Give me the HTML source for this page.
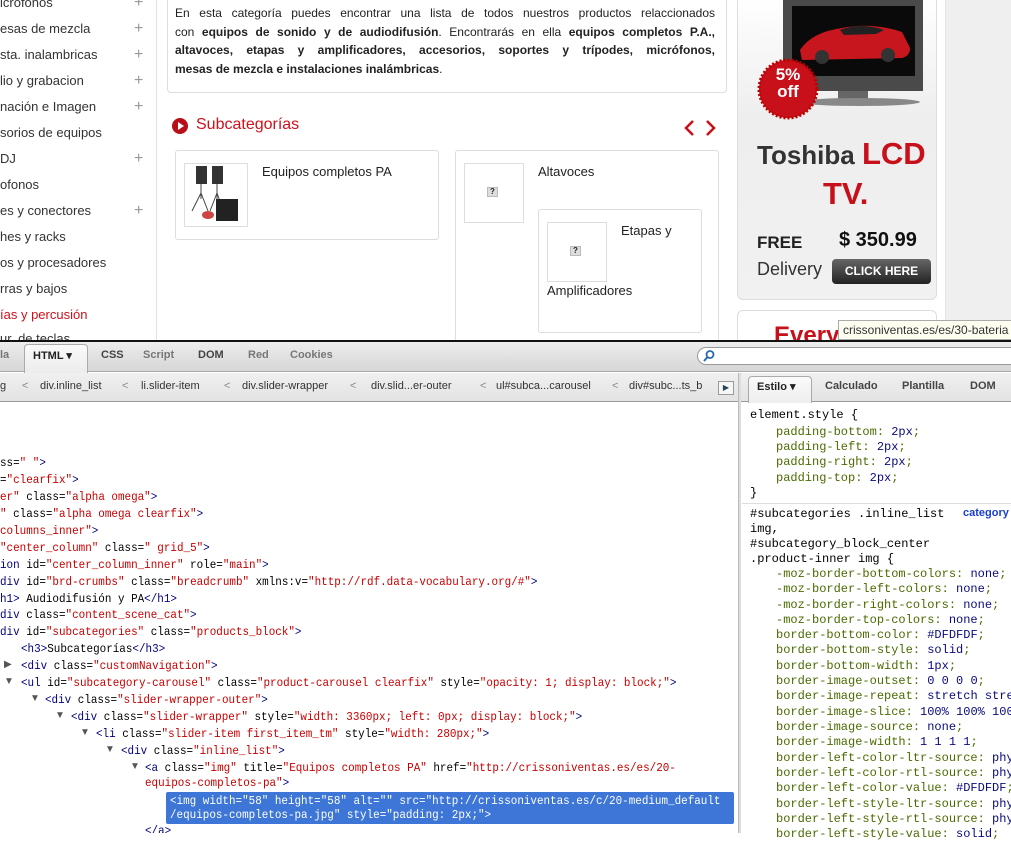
<!DOCTYPE html>
<html><head><meta charset="utf-8">
<style>
*{margin:0;padding:0;box-sizing:border-box}
body{width:1011px;height:833px;overflow:hidden;position:relative;background:#fff;font-family:"Liberation Sans",sans-serif;color:#222}
.a{position:absolute;white-space:nowrap}
.sb{font-size:13px;color:#333;left:0}
.pl{left:134px;font-size:16px;color:#999;font-weight:normal}
.desc{left:175px;width:540px;font-size:12px;text-align:justify;text-align-last:justify;color:#222;white-space:normal}
.desc b{font-weight:bold}
.card{position:absolute;border:1px solid #ddd;border-radius:3px;background:#fff}
.img{position:absolute;border:1px solid #ddd;background:#fff}
.q{position:absolute;width:11px;height:10px;background:#ddd;border:1px solid #bbb;font-size:8px;font-weight:bold;text-align:center;line-height:8px}
.code{position:absolute;left:0;top:403px;width:738px;height:430px;overflow:hidden;background:#fff}
.cl{position:absolute;font-family:"Liberation Mono",monospace;font-size:12px;white-space:nowrap;transform:scaleX(0.91);transform-origin:0 0;color:#000}
.t{color:#00007f}.v{color:#c80000}
.tri{position:absolute;font-size:10px;color:#555}
.css{position:absolute;font-family:"Liberation Mono",monospace;font-size:12px;white-space:nowrap;color:#000}
.p{color:#4a6b00}.n{color:#0a0a80}
.bc{position:absolute;top:380px;font-size:11px;color:#333;white-space:nowrap}
.bl{position:absolute;top:380px;font-size:11px;color:#888}
.tb{position:absolute;top:349px;font-size:11px;font-weight:bold;color:#777}
</style></head><body>

<!-- sidebar -->
<div class="a" style="left:156px;top:0;width:1px;height:340px;background:#e2e2e2"></div>
<div class="a sb" style="top:-5px">icrófonos</div><div class="a pl" style="top:-6px">+</div>
<div class="a sb" style="top:21px">esas de mezcla</div><div class="a pl" style="top:20px">+</div>
<div class="a sb" style="top:47px">sta. inalambricas</div><div class="a pl" style="top:46px">+</div>
<div class="a sb" style="top:73px">lio y grabacion</div><div class="a pl" style="top:72px">+</div>
<div class="a sb" style="top:99px">nación e Imagen</div><div class="a pl" style="top:98px">+</div>
<div class="a sb" style="top:125px">sorios de equipos</div>
<div class="a sb" style="top:151px"> DJ</div><div class="a pl" style="top:150px">+</div>
<div class="a sb" style="top:177px">ofonos</div>
<div class="a sb" style="top:203px">es y conectores</div><div class="a pl" style="top:202px">+</div>
<div class="a sb" style="top:229px">hes y racks</div>
<div class="a sb" style="top:255px">os y procesadores</div>
<div class="a sb" style="top:281px">rras y bajos</div>
<div class="a sb" style="top:307px;color:#d0101a">ías y percusión</div>
<div class="a sb" style="top:331px">ur. de teclas</div>

<!-- description box -->
<div class="card" style="left:167px;top:-6px;width:560px;height:99px;border-radius:4px"></div>
<div class="a desc" style="top:6px">En esta categoría puedes encontrar una lista de todos nuestros productos relaccionados</div>
<div class="a desc" style="top:25px">con <b>equipos de sonido y de audiodifusión</b>. Encontrarás en ella <b>equipos completos P.A.,</b></div>
<div class="a desc" style="top:43px"><b>altavoces, etapas y amplificadores, accesorios, soportes y trípodes, micrófonos,</b></div>
<div class="a desc" style="top:62px;text-align-last:left"><b>mesas de mezcla e instalaciones inalámbricas</b>.</div>

<!-- subcategorias heading -->
<div class="a" style="left:172px;top:118px;width:16px;height:16px;border-radius:50%;background:#b8101a"></div>
<div class="a" style="left:178px;top:122px;width:0;height:0;border-left:6px solid #fff;border-top:4px solid transparent;border-bottom:4px solid transparent"></div>
<div class="a" style="left:196px;top:116px;font-size:16px;color:#d0101a">Subcategorías</div>
<svg class="a" style="left:680px;top:118px" width="40" height="20"><path d="M13 3 L6 10 L13 17" stroke="#c8101a" stroke-width="2.5" fill="none"/><path d="M27 3 L34 10 L27 17" stroke="#c8101a" stroke-width="2.5" fill="none"/></svg>

<!-- card 1 -->
<div class="card" style="left:175px;top:150px;width:264px;height:90px"></div>
<div class="img" style="left:184px;top:163px;width:64px;height:64px"></div>
<svg class="a" style="left:186px;top:165px" width="60" height="60">
<rect x="10" y="1" width="11" height="18" fill="#333"/><rect x="26" y="1" width="11" height="18" fill="#333"/>
<path d="M15 19 L15 34 M15 28 L6 46 M15 28 L22 46 M31 19 L31 34 M31 28 L24 46 M31 28 L36 42" stroke="#444" stroke-width="1"/>
<rect x="30" y="34" width="22" height="22" fill="#222"/><ellipse cx="22" cy="50" rx="6" ry="4" fill="#c44"/>
</svg>
<div class="a" style="left:262px;top:164px;font-size:13px;color:#222">Equipos completos PA</div>

<!-- card 2 -->
<div class="card" style="left:455px;top:150px;width:264px;height:200px"></div>
<div class="img" style="left:464px;top:163px;width:60px;height:60px"></div>
<div class="q" style="left:487px;top:187px">?</div>
<div class="a" style="left:538px;top:164px;font-size:13px;color:#222">Altavoces</div>
<div class="card" style="left:538px;top:209px;width:164px;height:124px"></div>
<div class="img" style="left:547px;top:222px;width:60px;height:60px"></div>
<div class="q" style="left:570px;top:246px">?</div>
<div class="a" style="left:621px;top:223px;font-size:13px;color:#222">Etapas y</div>
<div class="a" style="left:547px;top:283px;font-size:13px;color:#222">Amplificadores</div>

<!-- right gray -->
<div class="a" style="left:945px;top:0;width:66px;height:340px;background:#efefef;border-left:1px solid #e3e3e3"></div>

<!-- ad -->
<div class="a" style="left:737px;top:-6px;width:200px;height:306px;border:1px solid #ddd;border-radius:6px;background:linear-gradient(#fff,#eee 40%,#f1f1f1)"></div>
<div class="a" style="left:783px;top:0;width:140px;height:91px;background:#4a4a4a"></div>
<div class="a" style="left:792px;top:6px;width:123px;height:70px;background:#0a0a0a"></div>
<svg class="a" style="left:792px;top:10px" width="123" height="60"><path d="M8 40 Q20 22 50 18 Q80 12 110 22 L118 38 Q118 46 110 48 L10 50 Z" fill="#c8161e"/><circle cx="30" cy="47" r="7" fill="#333"/><circle cx="96" cy="45" r="7" fill="#333"/><path d="M48 20 Q70 12 92 20 L84 24 L52 25Z" fill="#222"/></svg>
<div class="a" style="left:838px;top:91px;width:30px;height:8px;background:#666"></div>
<div class="a" style="left:800px;top:98px;width:120px;height:8px;border-radius:50%;background:#888"></div>
<svg class="a" style="left:757px;top:58px" width="62" height="62"><circle cx="31" cy="31" r="29" fill="#c8101a" stroke="#b00" stroke-width="3" stroke-dasharray="2 2"/></svg>
<div class="a" style="left:772px;top:66px;font-size:17px;font-weight:bold;color:#fff;line-height:17px;text-align:center;width:32px">5%<br>off</div>
<div class="a" style="left:757px;top:136px;font-size:26px;font-weight:bold;color:#333">Toshiba <span style="color:#c8101a;font-size:31px">LCD</span></div>
<div class="a" style="left:823px;top:176px;font-size:31px;font-weight:bold;color:#c8101a">TV.</div>
<div class="a" style="left:757px;top:233px;font-size:17px;font-weight:bold;color:#222">FREE</div>
<div class="a" style="left:839px;top:229px;font-size:20px;font-weight:bold;color:#111">$ 350.99</div>
<div class="a" style="left:757px;top:259px;font-size:18px;color:#333">Delivery</div>
<div class="a" style="left:832px;top:259px;width:99px;height:25px;border-radius:4px;background:linear-gradient(#666,#222);color:#fff;font-size:12px;font-weight:bold;text-align:center;line-height:25px">CLICK HERE</div>
<div class="a" style="left:737px;top:310px;width:200px;height:40px;border:1px solid #ddd;border-radius:6px;background:#fff"></div>
<div class="a" style="left:774px;top:322px;font-size:24px;font-weight:bold;color:#c8101a">Every</div>
<div class="a" style="left:838px;top:320px;width:180px;height:20px;background:#fdfdf0;border:1px solid #aaa;font-size:12px;color:#333;padding:2px 4px">crissoniventas.es/es/30-bateria</div>

<!-- firebug toolbar -->
<div class="a" style="left:0;top:340px;width:1011px;height:2px;background:#111"></div>
<div class="a" style="left:0;top:342px;width:1011px;height:30px;background:linear-gradient(#ededed,#d6d6d6);border-bottom:1px solid #aaa"></div>
<div class="tb" style="left:0">la</div>
<div class="a" style="left:24px;top:344px;width:64px;height:29px;background:linear-gradient(#fafafa,#ececec);border:1px solid #aaa;border-bottom:none;border-radius:4px 4px 0 0"></div>
<div class="tb" style="left:33px;color:#222">HTML ▾</div>
<div class="tb" style="left:101px;color:#444">CSS</div>
<div class="tb" style="left:143px">Script</div>
<div class="tb" style="left:198px;color:#444">DOM</div>
<div class="tb" style="left:248px">Red</div>
<div class="tb" style="left:290px">Cookies</div>
<div class="a" style="left:697px;top:347px;width:330px;height:18px;background:#fff;border:1px solid #999;border-radius:9px"></div>
<svg class="a" style="left:702px;top:349px" width="14" height="14"><circle cx="8" cy="5.5" r="3.5" stroke="#2a6aa8" stroke-width="1.8" fill="none"/><path d="M5.5 8 L2 12" stroke="#2a6aa8" stroke-width="2"/></svg>

<!-- breadcrumb bar -->
<div class="a" style="left:0;top:373px;width:1011px;height:29px;background:linear-gradient(#f0f0f0,#e3e3e3);border-bottom:1px solid #999"></div>
<div class="bc" style="left:0">g</div><div class="bl" style="left:22px">&lt;</div>
<div class="bc" style="left:40px">div.inline_list</div><div class="bl" style="left:122px">&lt;</div>
<div class="bc" style="left:141px">li.slider-item</div><div class="bl" style="left:224px">&lt;</div>
<div class="bc" style="left:242px">div.slider-wrapper</div><div class="bl" style="left:350px">&lt;</div>
<div class="bc" style="left:371px">div.slid...er-outer</div><div class="bl" style="left:480px">&lt;</div>
<div class="bc" style="left:496px">ul#subca...carousel</div><div class="bl" style="left:612px">&lt;</div>
<div class="bc" style="left:629px">div#subc...ts_b</div>
<div class="a" style="left:718px;top:381px;width:16px;height:14px;border:1px solid #999;background:#f6f6f6;font-size:8px;text-align:center;line-height:12px;color:#245">▶</div>
<div class="a" style="left:738px;top:373px;width:3px;height:460px;background:#ddd;border-left:1px solid #bbb"></div>
<div class="a" style="left:748px;top:376px;width:64px;height:27px;background:linear-gradient(#fafafa,#eee);border:1px solid #aaa;border-bottom:none;border-radius:4px 4px 0 0"></div>
<div class="bc" style="left:757px;font-weight:bold;color:#222">Estilo ▾</div>
<div class="bc" style="left:825px;font-weight:bold;color:#444">Calculado</div>
<div class="bc" style="left:902px;font-weight:bold;color:#444">Plantilla</div>
<div class="bc" style="left:970px;font-weight:bold;color:#444">DOM</div>

<!-- code -->
<div class="code">
<div class="cl" style="left:0;top:53px">ss=<span class="v">" "</span><span class="t">&gt;</span></div>
<div class="cl" style="left:0;top:70px">=<span class="v">"clearfix"</span><span class="t">&gt;</span></div>
<div class="cl" style="left:0;top:87px"><span class="v">er"</span> class=<span class="v">"alpha omega"</span><span class="t">&gt;</span></div>
<div class="cl" style="left:0;top:104px"><span class="v">"</span> class=<span class="v">"alpha omega clearfix"</span><span class="t">&gt;</span></div>
<div class="cl" style="left:0;top:121px"><span class="v">columns_inner"</span><span class="t">&gt;</span></div>
<div class="cl" style="left:0;top:138px"><span class="v">"center_column"</span> class=<span class="v">" grid_5"</span><span class="t">&gt;</span></div>
<div class="cl" style="left:0;top:155px"><span class="t">ion</span> id=<span class="v">"center_column_inner"</span> role=<span class="v">"main"</span><span class="t">&gt;</span></div>
<div class="cl" style="left:0;top:172px"><span class="t">div</span> id=<span class="v">"brd-crumbs"</span> class=<span class="v">"breadcrumb"</span> xmlns:v=<span class="v">"http://rdf.data-vocabulary.org/#"</span><span class="t">&gt;</span></div>
<div class="cl" style="left:0;top:189px"><span class="t">h1&gt;</span> Audiodifusión y PA<span class="t">&lt;/h1&gt;</span></div>
<div class="cl" style="left:0;top:205px"><span class="t">div</span> class=<span class="v">"content_scene_cat"</span><span class="t">&gt;</span></div>
<div class="cl" style="left:0;top:222px"><span class="t">div</span> id=<span class="v">"subcategories"</span> class=<span class="v">"products_block"</span><span class="t">&gt;</span></div>
<div class="cl" style="left:21px;top:239px"><span class="t">&lt;h3&gt;</span>Subcategorías<span class="t">&lt;/h3&gt;</span></div>
<div class="tri" style="left:4px;top:256px">▶</div>
<div class="cl" style="left:21px;top:256px"><span class="t">&lt;div</span> class=<span class="v">"customNavigation"</span><span class="t">&gt;</span></div>
<div class="tri" style="left:4px;top:273px">▼</div>
<div class="cl" style="left:21px;top:273px"><span class="t">&lt;ul</span> id=<span class="v">"subcategory-carousel"</span> class=<span class="v">"product-carousel clearfix"</span> style=<span class="v">"opacity: 1; display: block;"</span><span class="t">&gt;</span></div>
<div class="tri" style="left:30px;top:290px">▼</div>
<div class="cl" style="left:45px;top:290px"><span class="t">&lt;div</span> class=<span class="v">"slider-wrapper-outer"</span><span class="t">&gt;</span></div>
<div class="tri" style="left:55px;top:307px">▼</div>
<div class="cl" style="left:71px;top:307px"><span class="t">&lt;div</span> class=<span class="v">"slider-wrapper"</span> style=<span class="v">"width: 3360px; left: 0px; display: block;"</span><span class="t">&gt;</span></div>
<div class="tri" style="left:80px;top:324px">▼</div>
<div class="cl" style="left:96px;top:324px"><span class="t">&lt;li</span> class=<span class="v">"slider-item first_item_tm"</span> style=<span class="v">"width: 280px;"</span><span class="t">&gt;</span></div>
<div class="tri" style="left:105px;top:341px">▼</div>
<div class="cl" style="left:121px;top:341px"><span class="t">&lt;div</span> class=<span class="v">"inline_list"</span><span class="t">&gt;</span></div>
<div class="tri" style="left:130px;top:358px">▼</div>
<div class="cl" style="left:145px;top:358px"><span class="t">&lt;a</span> class=<span class="v">"img"</span> title=<span class="v">"Equipos completos PA"</span> href=<span class="v">"http://crissoniventas.es/es/20-</span></div>
<div class="cl" style="left:145px;top:373px"><span class="v">equipos-completos-pa"</span><span class="t">&gt;</span></div>
<div class="a" style="left:166px;top:389px;width:568px;height:32px;background:#3d76d6;border-radius:2px"></div>
<div class="cl" style="left:170px;top:391px;color:#fff">&lt;img width="58" height="58" alt="" src="http://crissoniventas.es/c/20-medium_default</div>
<div class="cl" style="left:170px;top:405px;color:#fff">/equipos-completos-pa.jpg" style="padding: 2px;"&gt;</div>
<div class="cl" style="left:145px;top:421px"><span class="t">&lt;/a&gt;</span></div>
</div>

<!-- css panel -->
<div class="a" style="left:742px;top:403px;width:269px;height:430px;background:#fff"></div>
<div class="css" style="left:750px;top:408px">element.style {</div>
<div class="css p" style="left:776px;top:425px">padding-bottom: <span class="n">2px</span>;</div>
<div class="css p" style="left:776px;top:440px">padding-left: <span class="n">2px</span>;</div>
<div class="css p" style="left:776px;top:455px">padding-right: <span class="n">2px</span>;</div>
<div class="css p" style="left:776px;top:471px">padding-top: <span class="n">2px</span>;</div>
<div class="css" style="left:750px;top:486px">}</div>
<div class="a" style="left:742px;top:503px;width:269px;height:1px;background:#ddd"></div>
<div class="css" style="left:750px;top:507px">#subcategories .inline_list</div>
<div class="css" style="left:963px;top:507px;color:#1a3fd0;font-weight:bold;font-size:11px;font-family:'Liberation Sans',sans-serif">category</div>
<div class="css" style="left:750px;top:522px">img,</div>
<div class="css" style="left:750px;top:537px">#subcategory_block_center</div>
<div class="css" style="left:750px;top:552px">.product-inner img {</div>
<div class="css p" style="left:776px;top:567px">-moz-border-bottom-colors: <span class="n">none</span>;</div>
<div class="css p" style="left:776px;top:582px">-moz-border-left-colors: <span class="n">none</span>;</div>
<div class="css p" style="left:776px;top:598px">-moz-border-right-colors: <span class="n">none</span>;</div>
<div class="css p" style="left:776px;top:613px">-moz-border-top-colors: <span class="n">none</span>;</div>
<div class="css p" style="left:776px;top:628px">border-bottom-color: <span class="n">#DFDFDF</span>;</div>
<div class="css p" style="left:776px;top:643px">border-bottom-style: <span class="n">solid</span>;</div>
<div class="css p" style="left:776px;top:659px">border-bottom-width: <span class="n">1px</span>;</div>
<div class="css p" style="left:776px;top:674px">border-image-outset: <span class="n">0 0 0 0</span>;</div>
<div class="css p" style="left:776px;top:689px">border-image-repeat: <span class="n">stretch stretch</span></div>
<div class="css p" style="left:776px;top:705px">border-image-slice: <span class="n">100% 100% 100% 100%</span></div>
<div class="css p" style="left:776px;top:720px">border-image-source: <span class="n">none</span>;</div>
<div class="css p" style="left:776px;top:735px">border-image-width: <span class="n">1 1 1 1</span>;</div>
<div class="css p" style="left:776px;top:751px">border-left-color-ltr-source: <span class="n">physical</span></div>
<div class="css p" style="left:776px;top:766px">border-left-color-rtl-source: <span class="n">physical</span></div>
<div class="css p" style="left:776px;top:781px">border-left-color-value: <span class="n">#DFDFDF</span>;</div>
<div class="css p" style="left:776px;top:797px">border-left-style-ltr-source: <span class="n">physical</span></div>
<div class="css p" style="left:776px;top:812px">border-left-style-rtl-source: <span class="n">physical</span></div>
<div class="css p" style="left:776px;top:827px">border-left-style-value: <span class="n">solid</span>;</div>
</body></html>
